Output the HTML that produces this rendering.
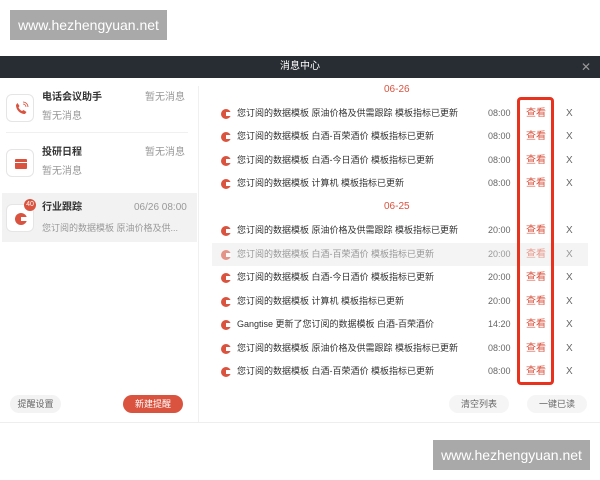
<!DOCTYPE html>
<html><head><meta charset="utf-8"><style>
*{margin:0;padding:0;box-sizing:border-box}
body{width:600px;height:480px;background:#fff;position:relative;overflow:hidden;font-family:"Liberation Sans","Noto Sans CJK SC",sans-serif;color:#333}
.a{position:absolute;white-space:nowrap;line-height:12px}
.wm{background:#a9a9a9;color:#fff;font-size:14px;line-height:30px;text-align:center}
.hdr{left:0;top:56px;width:600px;height:22px;background:#282c33;color:#fff;font-size:10px;text-align:center;line-height:22px}
.t{font-size:10px;color:#333}
.g{font-size:10px;color:#999}
.ib{width:28px;height:28px;border:1px solid #e5e5e5;border-radius:6px;background:#fff}
.row{left:212px;width:376px;height:23px}
.row span{position:absolute;top:0;line-height:23px;font-size:9px;white-space:nowrap}
.row .m{left:25px;color:#333}
.row .tm{left:276px;color:#666}
.row .v{left:314px;color:#d9533f;font-size:10px}
.row .x{left:354px;color:#666;font-size:10px}
.dot{position:absolute;left:9px;top:7px;width:10px;height:10px;border-radius:50%;background:#d9533f}
.dot:after{content:"";position:absolute;left:5px;top:3px;width:5px;height:4px;background:#fff}
.btn{height:18px;border-radius:9px;font-size:9px;line-height:18px;text-align:center}
</style></head><body>
<div class="a wm" style="left:10px;top:10px;width:157px">www.hezhengyuan.net</div>
<div class="a hdr">消息中心<span style="position:absolute;right:9px;top:0;color:#999;font-size:12px">✕</span></div>
<div class="a" style="left:198px;top:86px;width:1px;height:336px;background:#f0f0f0"></div>
<div class="a" style="left:0;top:422px;width:600px;height:1px;background:#eee"></div>
<!-- left -->
<div class="a ib" style="left:6px;top:94px"><svg width="28" height="28" viewBox="0 0 28 28"><path d="M9 10c0 5 4 9 9 9l1.5-2-3-2-1.5 1c-1.5-.7-2.8-2-3.5-3.5l1-1.5-2-3z" fill="#d9533f"/><path d="M16 9a3 3 0 0 1 3 3M16 7a5 5 0 0 1 5 5" stroke="#d9533f" fill="none" stroke-width=".8"/></svg></div>
<div class="a t" style="left:42px;top:92px;font-weight:bold">电话会议助手</div>
<div class="a g" style="left:145px;top:92px">暂无消息</div>
<div class="a g" style="left:42px;top:111px">暂无消息</div>
<div class="a" style="left:6px;top:132px;width:182px;height:1px;background:#f0f0f0"></div>
<div class="a ib" style="left:6px;top:149px"><svg width="28" height="28"><rect x="8" y="9" width="12" height="10" rx="1" fill="#d9533f"/><rect x="8" y="12" width="12" height="1" fill="#fff"/></svg></div>
<div class="a t" style="left:42px;top:147px;font-weight:bold">投研日程</div>
<div class="a g" style="left:145px;top:147px">暂无消息</div>
<div class="a g" style="left:42px;top:166px">暂无消息</div>
<div class="a" style="left:2px;top:193px;width:195px;height:49px;background:#f2f2f2"></div>
<div class="a ib" style="left:6px;top:204px"><svg width="28" height="28"><circle cx="14" cy="14" r="6" fill="#d9533f"/><rect x="14" y="12" width="6" height="4" fill="#fff"/></svg></div>
<div class="a" style="left:24px;top:199px;width:12px;height:12px;border-radius:50%;background:#d9533f;color:#fff;font-size:7px;line-height:12px;text-align:center">40</div>
<div class="a t" style="left:42px;top:202px;font-weight:bold">行业跟踪</div>
<div class="a g" style="left:134px;top:202px">06/26 08:00</div>
<div class="a g" style="left:42px;top:222px;font-size:9px">您订阅的数据模板 原油价格及供...</div>
<div class="a btn" style="left:10px;top:395px;width:51px;background:#f3f3f3;color:#666">提醒设置</div>
<div class="a btn" style="left:123px;top:395px;width:60px;background:#d9533f;color:#fff">新建提醒</div>
<!-- right -->
<div class="a" style="left:384px;top:84px;font-size:10px;color:#d9533f">06-26</div>
<div class="a" style="left:384px;top:201px;font-size:10px;color:#d9533f">06-25</div>
<div class="a row" style="top:102px"><i class="dot"></i><span class="m">您订阅的数据模板 原油价格及供需跟踪 模板指标已更新</span><span class="tm">08:00</span><span class="v">查看</span><span class="x">X</span></div>
<div class="a row" style="top:125px"><i class="dot"></i><span class="m">您订阅的数据模板 白酒-百荣酒价 模板指标已更新</span><span class="tm">08:00</span><span class="v">查看</span><span class="x">X</span></div>
<div class="a row" style="top:149px"><i class="dot"></i><span class="m">您订阅的数据模板 白酒-今日酒价 模板指标已更新</span><span class="tm">08:00</span><span class="v">查看</span><span class="x">X</span></div>
<div class="a row" style="top:172px"><i class="dot"></i><span class="m">您订阅的数据模板 计算机 模板指标已更新</span><span class="tm">08:00</span><span class="v">查看</span><span class="x">X</span></div>
<div class="a row" style="top:219px"><i class="dot"></i><span class="m">您订阅的数据模板 原油价格及供需跟踪 模板指标已更新</span><span class="tm">20:00</span><span class="v">查看</span><span class="x">X</span></div>
<div class="a row" style="top:243px;background:#f4f4f4"><i class="dot" style="opacity:.6"></i><span class="m" style="color:#999">您订阅的数据模板 白酒-百荣酒价 模板指标已更新</span><span class="tm" style="color:#999">20:00</span><span class="v" style="color:#e8998d">查看</span><span class="x" style="color:#999">X</span></div>
<div class="a row" style="top:266px"><i class="dot"></i><span class="m">您订阅的数据模板 白酒-今日酒价 模板指标已更新</span><span class="tm">20:00</span><span class="v">查看</span><span class="x">X</span></div>
<div class="a row" style="top:290px"><i class="dot"></i><span class="m">您订阅的数据模板 计算机 模板指标已更新</span><span class="tm">20:00</span><span class="v">查看</span><span class="x">X</span></div>
<div class="a row" style="top:313px"><i class="dot"></i><span class="m">Gangtise 更新了您订阅的数据模板 白酒-百荣酒价</span><span class="tm">14:20</span><span class="v">查看</span><span class="x">X</span></div>
<div class="a row" style="top:337px"><i class="dot"></i><span class="m">您订阅的数据模板 原油价格及供需跟踪 模板指标已更新</span><span class="tm">08:00</span><span class="v">查看</span><span class="x">X</span></div>
<div class="a row" style="top:360px"><i class="dot"></i><span class="m">您订阅的数据模板 白酒-百荣酒价 模板指标已更新</span><span class="tm">08:00</span><span class="v">查看</span><span class="x">X</span></div>
<div class="a" style="left:517px;top:97px;width:37px;height:288px;border:3px solid #e8321e;border-radius:4px"></div>
<div class="a btn" style="left:449px;top:395px;width:60px;background:#f5f5f5;color:#666">清空列表</div>
<div class="a btn" style="left:527px;top:395px;width:60px;background:#f5f5f5;color:#666">一键已读</div>
<div class="a wm" style="left:433px;top:440px;width:157px">www.hezhengyuan.net</div>
</body></html>
